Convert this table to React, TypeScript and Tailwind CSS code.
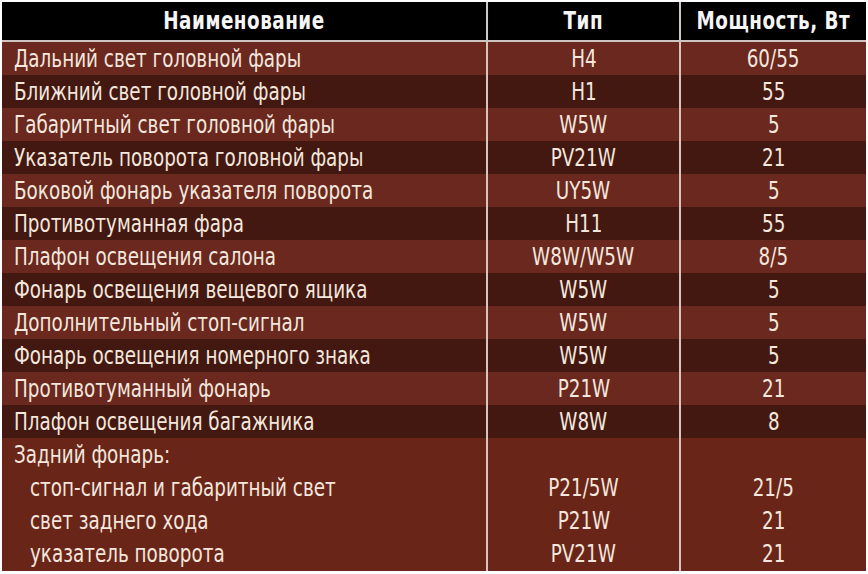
import React from "react";

const rows: [string, string, string][] = [
  ["Дальний свет головной фары", "H4", "60/55"],
  ["Ближний свет головной фары", "H1", "55"],
  ["Габаритный свет головной фары", "W5W", "5"],
  ["Указатель поворота головной фары", "PV21W", "21"],
  ["Боковой фонарь указателя поворота", "UY5W", "5"],
  ["Противотуманная фара", "H11", "55"],
  ["Плафон освещения салона", "W8W/W5W", "8/5"],
  ["Фонарь освещения вещевого ящика", "W5W", "5"],
  ["Дополнительный стоп-сигнал", "W5W", "5"],
  ["Фонарь освещения номерного знака", "W5W", "5"],
  ["Противотуманный фонарь", "P21W", "21"],
  ["Плафон освещения багажника", "W8W", "8"],
];

const sub: [string, string, string][] = [
  ["Задний фонарь:", "", ""],
  ["стоп-сигнал и габаритный свет", "P21/5W", "21/5"],
  ["свет заднего хода", "P21W", "21"],
  ["указатель поворота", "PV21W", "21"],
];

const font = { fontFamily: '"DejaVu Sans Condensed", "Liberation Sans", sans-serif' };

function L({ children }: { children: React.ReactNode }) {
  return <span className="inline-block scale-x-[0.85] origin-left whitespace-nowrap">{children}</span>;
}
function C({ children }: { children: React.ReactNode }) {
  return <span className="inline-block scale-x-[0.85] origin-center whitespace-nowrap">{children}</span>;
}

export default function App() {
  return (
    <div className="w-[868px] h-[574px] bg-white pt-[2px] pl-[2px] overflow-hidden" style={font}>
      <div className="w-[864px] h-[569px] flex flex-col text-[#f4e7de]">
        <div className="flex h-[38px] bg-black items-center text-[24px] font-bold tracking-[0.6px] text-[#f5f5f5] border-b-2 border-[#cfc6c2] box-content">
          <div className="w-[484px] text-center"><C>Наименование</C></div>
          <div className="w-[2px] self-stretch bg-[#cfc8c4]" />
          <div className="w-[191px] text-center"><C>Тип</C></div>
          <div className="w-[2px] self-stretch bg-[#cfc8c4]" />
          <div className="flex-1 text-center"><C>Мощность, Вт</C></div>
        </div>
        {rows.map((r, i) => (
          <div
            key={i}
            className={`flex h-[33px] items-center text-[24px] ${i % 2 === 0 ? "bg-[#6a281f]" : "bg-[#431811]"}`}
          >
            <div className="w-[484px] pl-[12px]"><L>{r[0]}</L></div>
            <div className="w-[2px] self-stretch bg-[#d9c4bd]" />
            <div className="w-[191px] text-center"><C>{r[1]}</C></div>
            <div className="w-[2px] self-stretch bg-[#d9c4bd]" />
            <div className="flex-1 text-center"><C>{r[2]}</C></div>
          </div>
        ))}
        <div className="flex flex-col flex-1 bg-[#6a2519] relative">
          <div className="absolute left-[484px] top-0 bottom-0 w-[2px] bg-[#d9c4bd]" />
          <div className="absolute left-[677px] top-0 bottom-0 w-[2px] bg-[#d9c4bd]" />
          {sub.map((r, i) => (
            <div key={i} className="flex h-[33px] items-center text-[24px]">
              <div className={`w-[484px] ${i === 0 ? "pl-[12px]" : "pl-[28px]"}`}><L>{r[0]}</L></div>
              <div className="w-[2px]" />
              <div className="w-[191px] text-center"><C>{r[1]}</C></div>
              <div className="w-[2px]" />
              <div className="flex-1 text-center"><C>{r[2]}</C></div>
            </div>
          ))}
        </div>
      </div>
    </div>
  );
}
